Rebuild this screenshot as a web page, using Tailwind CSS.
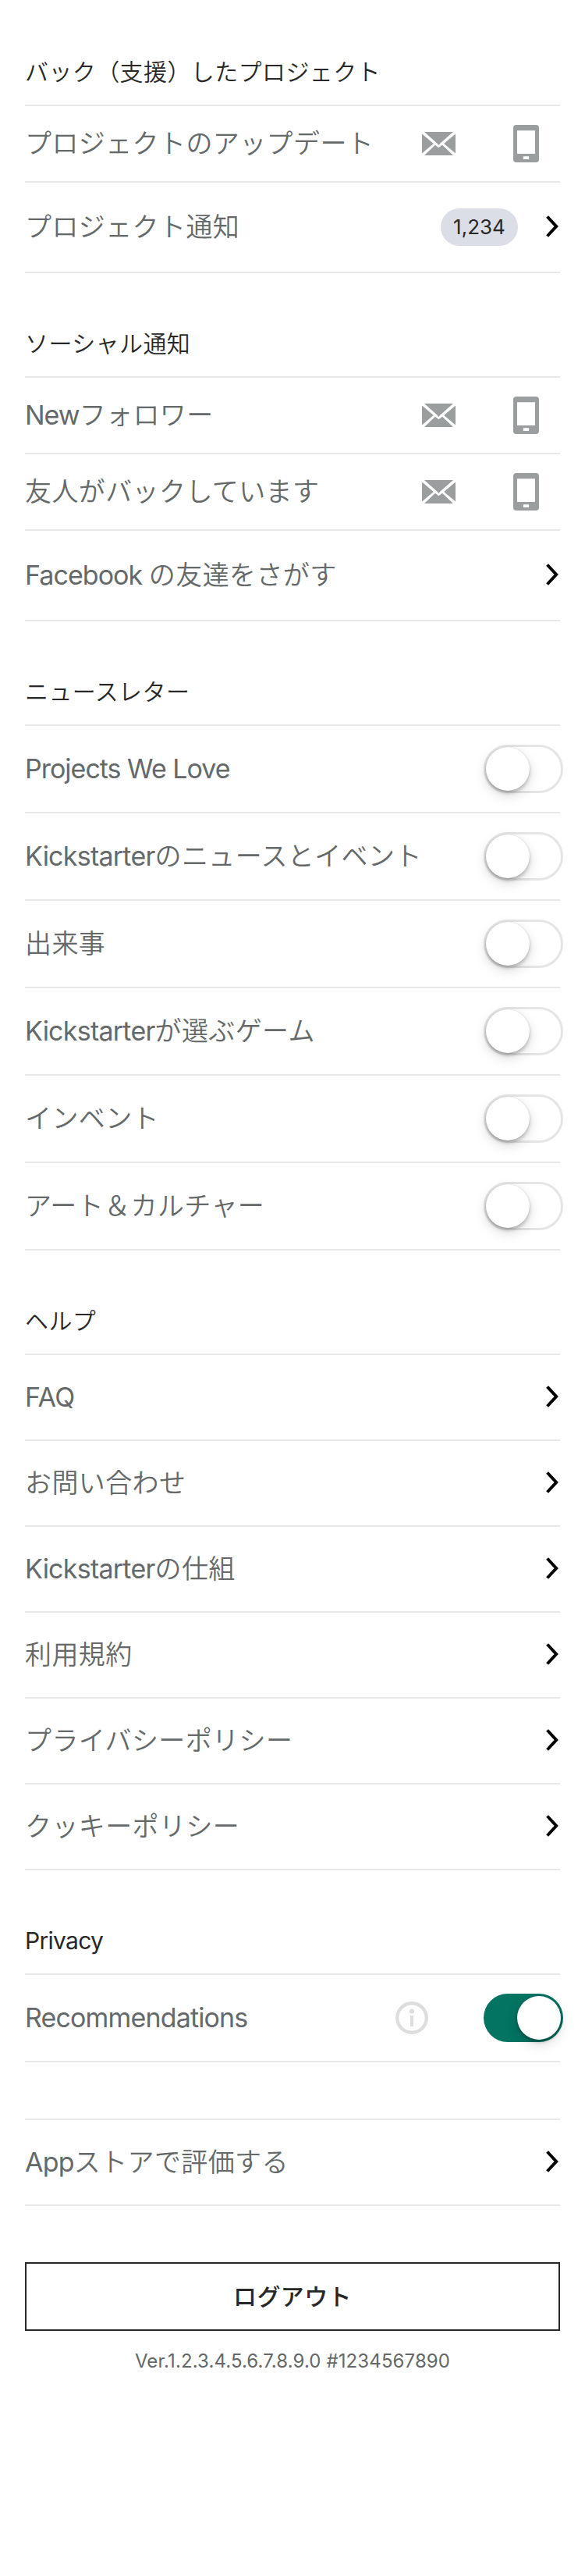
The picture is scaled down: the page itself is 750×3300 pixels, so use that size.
<!DOCTYPE html>
<html lang="ja">
<head>
<meta charset="utf-8">
<title>設定</title>
<script src="https://cdn.jsdelivr.net/npm/@tailwindcss/browser@4"></script>
</head>
<body class="bg-white">
<svg class="hidden">
  <symbol id="mail" viewBox="0 0 43 30"><path d="M3 0H40L23.2 14.8L21.4 17.2L19.6 14.8ZM0 2.4L14.8 15L0 27.6ZM43 2.4L28.2 15L43 27.6ZM3 30L17 16.8L21.4 20.2L26 16.8L40 30Z"/></symbol>
  <symbol id="phone" viewBox="0 0 33 48"><path fill-rule="evenodd" d="M4 0H29Q33 0 33 4V44Q33 48 29 48H4Q0 48 0 44V4Q0 0 4 0ZM5 7.3V37H28V7.3ZM13.5 40.3Q12.8 40.3 12.8 41V43.4Q12.8 44.1 13.5 44.1H19.5Q20.2 44.1 20.2 43.4V41Q20.2 40.3 19.5 40.3Z"/></symbol>
  <symbol id="chevron" viewBox="0 0 18 28"><path d="M1.6 1.5L13.2 14L1.6 26.5" fill="none" stroke="#000" stroke-width="4"/></symbol>
  <symbol id="info" viewBox="0 0 42 42"><circle cx="21" cy="21" r="18.8" fill="none" stroke="#dcdede" stroke-width="4.4"/><circle cx="21" cy="12.4" r="3" fill="#dcdede"/><rect x="19" y="18" width="4" height="14" fill="#dcdede"/></symbol>
</svg>
<main class="h-[3300px] w-[750px] overflow-hidden px-8 pt-[50px] font-['Inter','Noto_Sans_CJK_JP',sans-serif] text-[34px] leading-[40px] tracking-[0.4px] font-[350] text-[#656969]">

  <section>
    <h2 class="flex h-[86px] items-center border-b-2 border-[#e8e8e8] text-[30px] text-[#282828]">バック（支援）したプロジェクト</h2>
    <div class="flex h-[98px] items-center border-b-2 border-[#e8e8e8]">
      <p class="flex-1">プロジェクトのアップデート</p>
      <div class="mr-[27px] flex items-center gap-[74px] fill-[#9b9e9e]"><svg class="h-[30px] w-[43px]"><use href="#mail"/></svg><svg class="h-12 w-[33px]"><use href="#phone"/></svg></div>
    </div>
    <div class="flex h-[116px] items-center border-b-2 border-[#e8e8e8]">
      <p class="flex-1">プロジェクト通知</p>
      <span class="mr-[36px] flex h-12 w-[99px] items-center justify-center rounded-full bg-[#dcdee7] text-[26px] font-normal tracking-normal text-[#282828]">1,234</span>
      <svg class="mb-0.5 h-7 w-[18px]"><use href="#chevron"/></svg>
    </div>
  </section>

  <section class="mt-12">
    <h2 class="flex h-[86px] items-center border-b-2 border-[#e8e8e8] text-[30px] text-[#282828]">ソーシャル通知</h2>
    <div class="flex h-[98px] items-center border-b-2 border-[#e8e8e8]">
      <p class="flex-1"><span class="font-normal tracking-[-1px]">New</span>フォロワー</p>
      <div class="mr-[27px] flex items-center gap-[74px] fill-[#9b9e9e]"><svg class="h-[30px] w-[43px]"><use href="#mail"/></svg><svg class="h-12 w-[33px]"><use href="#phone"/></svg></div>
    </div>
    <div class="flex h-[98px] items-center border-b-2 border-[#e8e8e8]">
      <p class="flex-1">友人がバックしています</p>
      <div class="mr-[27px] flex items-center gap-[74px] fill-[#9b9e9e]"><svg class="h-[30px] w-[43px]"><use href="#mail"/></svg><svg class="h-12 w-[33px]"><use href="#phone"/></svg></div>
    </div>
    <div class="flex h-[116px] items-center border-b-2 border-[#e8e8e8]">
      <p class="flex-1"><span class="font-normal tracking-[-0.95px]">Facebook </span>の友達をさがす</p>
      <svg class="mb-0.5 h-7 w-[18px]"><use href="#chevron"/></svg>
    </div>
  </section>

  <section class="mt-12">
    <h2 class="flex h-[86px] items-center border-b-2 border-[#e8e8e8] text-[30px] text-[#282828]">ニュースレター</h2>
    <div class="flex h-[112px] items-center border-b-2 border-[#e8e8e8]">
      <p class="flex-1"><span class="font-normal tracking-[-1px]">Projects We Love</span></p>
      <div class="-mr-1 flex h-[62px] w-[102px] items-center rounded-full border-3 border-[#e5e5e5]"><i class="size-14 rounded-full bg-white shadow-[0_6px_16px_rgba(0,0,0,0.15),0_3px_4px_rgba(0,0,0,0.22),0_0_1px_rgba(0,0,0,0.2)]"></i></div>
    </div>
    <div class="flex h-[112px] items-center border-b-2 border-[#e8e8e8]">
      <p class="flex-1"><span class="font-normal tracking-[-0.75px]">Kickstarter</span>のニュースとイベント</p>
      <div class="-mr-1 flex h-[62px] w-[102px] items-center rounded-full border-3 border-[#e5e5e5]"><i class="size-14 rounded-full bg-white shadow-[0_6px_16px_rgba(0,0,0,0.15),0_3px_4px_rgba(0,0,0,0.22),0_0_1px_rgba(0,0,0,0.2)]"></i></div>
    </div>
    <div class="flex h-[112px] items-center border-b-2 border-[#e8e8e8]">
      <p class="flex-1">出来事</p>
      <div class="-mr-1 flex h-[62px] w-[102px] items-center rounded-full border-3 border-[#e5e5e5]"><i class="size-14 rounded-full bg-white shadow-[0_6px_16px_rgba(0,0,0,0.15),0_3px_4px_rgba(0,0,0,0.22),0_0_1px_rgba(0,0,0,0.2)]"></i></div>
    </div>
    <div class="flex h-[112px] items-center border-b-2 border-[#e8e8e8]">
      <p class="flex-1"><span class="font-normal tracking-[-0.75px]">Kickstarter</span>が選ぶゲーム</p>
      <div class="-mr-1 flex h-[62px] w-[102px] items-center rounded-full border-3 border-[#e5e5e5]"><i class="size-14 rounded-full bg-white shadow-[0_6px_16px_rgba(0,0,0,0.15),0_3px_4px_rgba(0,0,0,0.22),0_0_1px_rgba(0,0,0,0.2)]"></i></div>
    </div>
    <div class="flex h-[112px] items-center border-b-2 border-[#e8e8e8]">
      <p class="flex-1">インベント</p>
      <div class="-mr-1 flex h-[62px] w-[102px] items-center rounded-full border-3 border-[#e5e5e5]"><i class="size-14 rounded-full bg-white shadow-[0_6px_16px_rgba(0,0,0,0.15),0_3px_4px_rgba(0,0,0,0.22),0_0_1px_rgba(0,0,0,0.2)]"></i></div>
    </div>
    <div class="flex h-[112px] items-center border-b-2 border-[#e8e8e8]">
      <p class="flex-1">アート＆カルチャー</p>
      <div class="-mr-1 flex h-[62px] w-[102px] items-center rounded-full border-3 border-[#e5e5e5]"><i class="size-14 rounded-full bg-white shadow-[0_6px_16px_rgba(0,0,0,0.15),0_3px_4px_rgba(0,0,0,0.22),0_0_1px_rgba(0,0,0,0.2)]"></i></div>
    </div>
  </section>

  <section class="mt-12">
    <h2 class="flex h-[86px] items-center border-b-2 border-[#e8e8e8] text-[30px] text-[#282828]">ヘルプ</h2>
    <div class="flex h-[110px] items-center border-b-2 border-[#e8e8e8]">
      <p class="flex-1"><span class="font-normal tracking-[-0.5px]">FAQ</span></p>
      <svg class="mb-0.5 h-7 w-[18px]"><use href="#chevron"/></svg>
    </div>
    <div class="flex h-[110px] items-center border-b-2 border-[#e8e8e8]">
      <p class="flex-1">お問い合わせ</p>
      <svg class="mb-0.5 h-7 w-[18px]"><use href="#chevron"/></svg>
    </div>
    <div class="flex h-[110px] items-center border-b-2 border-[#e8e8e8]">
      <p class="flex-1"><span class="font-normal tracking-[-0.75px]">Kickstarter</span>の仕組</p>
      <svg class="mb-0.5 h-7 w-[18px]"><use href="#chevron"/></svg>
    </div>
    <div class="flex h-[110px] items-center border-b-2 border-[#e8e8e8]">
      <p class="flex-1">利用規約</p>
      <svg class="mb-0.5 h-7 w-[18px]"><use href="#chevron"/></svg>
    </div>
    <div class="flex h-[110px] items-center border-b-2 border-[#e8e8e8]">
      <p class="flex-1">プライバシーポリシー</p>
      <svg class="mb-0.5 h-7 w-[18px]"><use href="#chevron"/></svg>
    </div>
    <div class="flex h-[110px] items-center border-b-2 border-[#e8e8e8]">
      <p class="flex-1">クッキーポリシー</p>
      <svg class="mb-0.5 h-7 w-[18px]"><use href="#chevron"/></svg>
    </div>
  </section>

  <section class="mt-12">
    <h2 class="flex h-[86px] items-center border-b-2 border-[#e8e8e8] text-[30px] font-normal tracking-[-0.7px] text-[#282828]">Privacy</h2>
    <div class="flex h-[112px] items-center border-b-2 border-[#e8e8e8]">
      <p class="flex-1"><span class="font-normal tracking-[-0.85px]">Recommendations</span></p>
      <svg class="mr-[71px] size-[42px]"><use href="#info"/></svg>
      <div class="-mr-1 flex h-[62px] w-[102px] items-center justify-end rounded-full bg-[#037362] pr-[3px]"><i class="size-14 rounded-full bg-white shadow-[0_6px_16px_rgba(0,0,0,0.15),0_3px_4px_rgba(0,0,0,0.22),0_0_1px_rgba(0,0,0,0.2)]"></i></div>
    </div>
  </section>

  <section class="mt-[72px]">
    <div class="flex h-[112px] items-center border-y-2 border-[#e8e8e8]">
      <p class="flex-1"><span class="font-normal tracking-[-0.8px]">App</span>ストアで評価する</p>
      <svg class="mb-0.5 h-7 w-[18px]"><use href="#chevron"/></svg>
    </div>
  </section>

  <button class="mt-[72px] flex h-[88px] w-full items-center justify-center border-2 border-[#282828] text-[30px] font-medium tracking-[0.4px] text-[#282828]">ログアウト</button>
  <p class="mt-[19px] text-center text-[24px] font-normal tracking-[0.1px] text-[#656868]">Ver.1.2.3.4.5.6.7.8.9.0 #1234567890</p>
</main>
</body>
</html>
